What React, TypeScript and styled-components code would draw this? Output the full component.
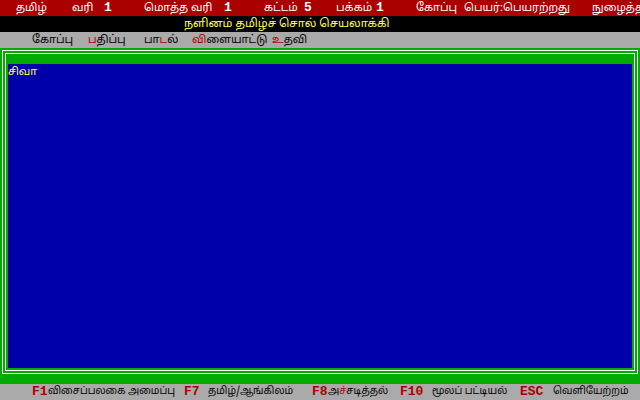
import React from "react";
import styled, { createGlobalStyle } from "styled-components";

const Global = createGlobalStyle`
  html, body { margin: 0; padding: 0; background: #000; }
  body { width: 640px; height: 400px; overflow: hidden; }
  #root { width: 640px; height: 400px; }
`;

const Screen = styled.div`
  width: 640px;
  height: 400px;
  display: flex;
  flex-direction: column;
  font-family: "Noto Sans Tamil", "Lohit Tamil", "Liberation Sans", sans-serif;
  font-size: 11px;
`;

const Row = styled.div<{ $bg: string; $fg: string }>`
  height: 16px;
  flex: 0 0 16px;
  background: ${(p) => p.$bg};
  color: ${(p) => p.$fg};
  line-height: 16px;
  white-space: nowrap;
  overflow: hidden;
`;

const StatusBar = styled(Row)`
  display: grid;
  grid-template-columns: 56px 72px 120px 72px 80px 176px auto;
  padding-left: 16px;
`;

const Stat = styled.span<{ $labelWidth?: number }>`
  display: grid;
  grid-template-columns: ${(p) => (p.$labelWidth ? `${p.$labelWidth}px auto` : "auto")};
`;

const Num = styled.span`
  font-family: "Liberation Mono", monospace;
  font-weight: bold;
  font-size: 13px;
`;

const TitleBar = styled(Row)`
  padding-left: 184px;
  font-size: 11.5px;
`;

const MenuBar = styled(Row)`
  display: grid;
  grid-template-columns: 56px 56px 48px 80px auto;
  padding-left: 32px;
`;

const Hot = styled.span`
  color: #aa0000;
`;

const Frame = styled.div`
  flex: 1;
  background: #00aa00;
  padding: 2px 2px 10px 2px;
  display: flex;
`;

const OuterLine = styled.div`
  flex: 1;
  border: 1px solid #ffffff;
  padding: 2px;
  display: flex;
`;

const InnerLine = styled.div`
  flex: 1;
  border: 1px solid #ffffff;
  padding: 10px 2px 2px 2px;
  display: flex;
`;

const Editor = styled.div`
  flex: 1;
  background: #0000aa;
  color: #ffff55;
  line-height: 16px;
`;

const FooterBar = styled(Row)`
  display: grid;
  grid-template-columns: 152px 128px 88px 120px auto;
  padding-left: 32px;
  font-size: 10px;
`;

const FKey = styled.span<{ $keyWidth: number }>`
  display: grid;
  grid-template-columns: ${(p) => p.$keyWidth}px auto;
`;

const KeyName = styled.span`
  color: #aa0000;
  font-family: "Liberation Mono", monospace;
  font-weight: bold;
  font-size: 13px;
`;

export default function App() {
  return (
    <>
      <Global />
      <Screen>
        <StatusBar $bg="#aa0000" $fg="#ffffff">
          <Stat>தமிழ்</Stat>
          <Stat $labelWidth={32}>
            <span>வரி</span>
            <Num>1</Num>
          </Stat>
          <Stat $labelWidth={80}>
            <span>மொத்த வரி</span>
            <Num>1</Num>
          </Stat>
          <Stat $labelWidth={40}>
            <span>கட்டம்</span>
            <Num>5</Num>
          </Stat>
          <Stat $labelWidth={40}>
            <span>பக்கம்</span>
            <Num>1</Num>
          </Stat>
          <Stat $labelWidth={48}>
            <span>கோப்பு</span>
            <span>பெயர்:பெயரற்றது</span>
          </Stat>
          <Stat>நுழைத்தல்</Stat>
        </StatusBar>
        <TitleBar $bg="#000000" $fg="#ffff55">
          நளினம் தமிழ்ச் சொல் செயலாக்கி
        </TitleBar>
        <MenuBar $bg="#aaaaaa" $fg="#000000">
          <span>கோப்பு</span>
          <span>
            <Hot>ப</Hot>திப்பு
          </span>
          <span>
            பா<Hot>ட</Hot>ல்
          </span>
          <span>
            <Hot>வி</Hot>ளையாட்டு
          </span>
          <span>
            <Hot>உ</Hot>தவி
          </span>
        </MenuBar>
        <Frame>
          <OuterLine>
            <InnerLine>
              <Editor>சிவா</Editor>
            </InnerLine>
          </OuterLine>
        </Frame>
        <FooterBar $bg="#aaaaaa" $fg="#000000">
          <FKey $keyWidth={16}>
            <KeyName>F1</KeyName>
            <span>விசைப்பலகை அமைப்பு</span>
          </FKey>
          <FKey $keyWidth={24}>
            <KeyName>F7</KeyName>
            <span>தமிழ்/ஆங்கிலம்</span>
          </FKey>
          <FKey $keyWidth={16}>
            <KeyName>F8</KeyName>
            <span>
              அ<Hot>ச்</Hot>சடித்தல்
            </span>
          </FKey>
          <FKey $keyWidth={32}>
            <KeyName>F10</KeyName>
            <span>மூலப் பட்டியல்</span>
          </FKey>
          <FKey $keyWidth={33}>
            <KeyName>ESC</KeyName>
            <span>வெளியேற்றம்</span>
          </FKey>
        </FooterBar>
      </Screen>
    </>
  );
}
